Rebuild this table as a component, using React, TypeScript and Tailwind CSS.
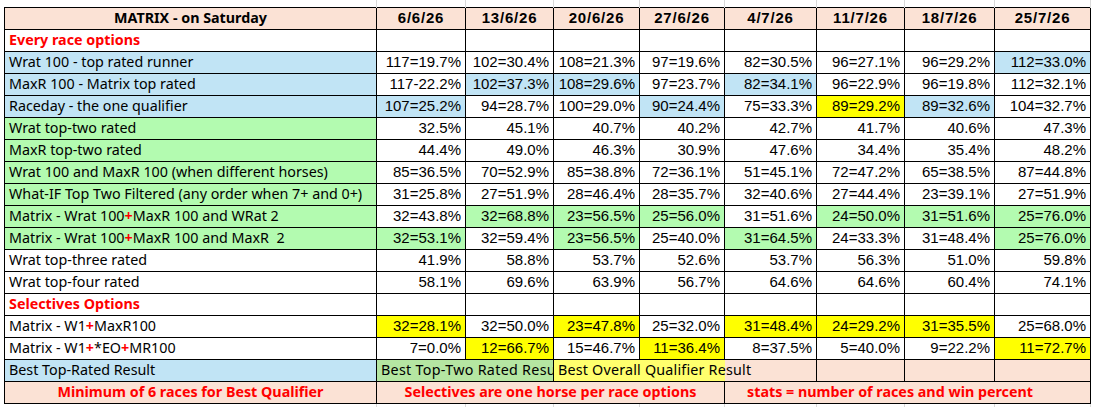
import React from "react";

type Cell = { v: string; bg?: string };
type Row = { label: React.ReactNode; labelBg: string; cells: Cell[] };

const BLUE = "bg-[#c1e4f5]";
const GREEN = "bg-[#b3fbb0]";
const YEL = "bg-[#ffff00]";
const PEACH = "bg-[#fbe2d5]";

const DATES = ["6/6/26", "13/6/26", "20/6/26", "27/6/26", "4/7/26", "11/7/26", "18/7/26", "25/7/26"];
const COLS = [89, 88, 86, 85, 92, 88, 90, 96];

const Plus = () => <span className="text-[#ff0000] font-bold">+</span>;

const c = (v: string, bg?: string): Cell => ({ v, bg });

const ROWS: Row[] = [
  {
    label: "Wrat 100 - top rated runner",
    labelBg: BLUE,
    cells: [c("117=19.7%"), c("102=30.4%"), c("108=21.3%"), c("97=19.6%"), c("82=30.5%"), c("96=27.1%"), c("96=29.2%"), c("112=33.0%", BLUE)],
  },
  {
    label: "MaxR 100 - Matrix top rated",
    labelBg: BLUE,
    cells: [c("117-22.2%"), c("102=37.3%", BLUE), c("108=29.6%", BLUE), c("97=23.7%"), c("82=34.1%", BLUE), c("96=22.9%"), c("96=19.8%"), c("112=32.1%")],
  },
  {
    label: "Raceday - the one qualifier",
    labelBg: BLUE,
    cells: [c("107=25.2%", BLUE), c("94=28.7%"), c("100=29.0%"), c("90=24.4%", BLUE), c("75=33.3%"), c("89=29.2%", YEL), c("89=32.6%", BLUE), c("104=32.7%")],
  },
  {
    label: "Wrat top-two rated",
    labelBg: GREEN,
    cells: ["32.5%", "45.1%", "40.7%", "40.2%", "42.7%", "41.7%", "40.6%", "47.3%"].map((v) => c(v)),
  },
  {
    label: "MaxR top-two rated",
    labelBg: GREEN,
    cells: ["44.4%", "49.0%", "46.3%", "30.9%", "47.6%", "34.4%", "35.4%", "48.2%"].map((v) => c(v)),
  },
  {
    label: "Wrat 100 and MaxR 100 (when different horses)",
    labelBg: GREEN,
    cells: ["85=36.5%", "70=52.9%", "85=38.8%", "72=36.1%", "51=45.1%", "72=47.2%", "65=38.5%", "87=44.8%"].map((v) => c(v)),
  },
  {
    label: "What-IF Top Two Filtered (any order when 7+ and 0+)",
    labelBg: GREEN,
    cells: ["31=25.8%", "27=51.9%", "28=46.4%", "28=35.7%", "32=40.6%", "27=44.4%", "23=39.1%", "27=51.9%"].map((v) => c(v)),
  },
  {
    label: (
      <>
        Matrix - Wrat 100<Plus />MaxR 100 and WRat 2
      </>
    ),
    labelBg: GREEN,
    cells: [c("32=43.8%"), c("32=68.8%", GREEN), c("23=56.5%", GREEN), c("25=56.0%", GREEN), c("31=51.6%"), c("24=50.0%", GREEN), c("31=51.6%", GREEN), c("25=76.0%", GREEN)],
  },
  {
    label: (
      <>
        Matrix - Wrat 100<Plus />MaxR 100 and MaxR&nbsp; 2
      </>
    ),
    labelBg: GREEN,
    cells: [c("32=53.1%", GREEN), c("32=59.4%"), c("23=56.5%", GREEN), c("25=40.0%"), c("31=64.5%", GREEN), c("24=33.3%"), c("31=48.4%"), c("25=76.0%", GREEN)],
  },
  {
    label: "Wrat top-three rated",
    labelBg: "bg-white",
    cells: ["41.9%", "58.8%", "53.7%", "52.6%", "53.7%", "56.3%", "51.0%", "59.8%"].map((v) => c(v)),
  },
  {
    label: "Wrat top-four rated",
    labelBg: "bg-white",
    cells: ["58.1%", "69.6%", "63.9%", "56.7%", "64.6%", "64.6%", "60.4%", "74.1%"].map((v) => c(v)),
  },
];

const SELECTIVE: Row[] = [
  {
    label: (
      <>
        Matrix - W1<Plus />MaxR100
      </>
    ),
    labelBg: "bg-white",
    cells: [c("32=28.1%", YEL), c("32=50.0%"), c("23=47.8%", YEL), c("25=32.0%"), c("31=48.4%", YEL), c("24=29.2%", YEL), c("31=35.5%", YEL), c("25=68.0%")],
  },
  {
    label: (
      <>
        Matrix - W1<Plus />*EO<Plus />MR100
      </>
    ),
    labelBg: "bg-white",
    cells: [c("7=0.0%"), c("12=66.7%", YEL), c("15=46.7%"), c("11=36.4%", YEL), c("8=37.5%"), c("5=40.0%"), c("9=22.2%"), c("11=72.7%", YEL)],
  },
];

// every sheet cell: black grid line, fixed 22px row
const td = "border border-black p-0 h-[22px] leading-[20px]";
const labelFont = "font-['Noto_Sans',sans-serif] text-[14.3px]";
const numFont = "font-['Liberation_Sans',Arial,sans-serif] text-[15px]";

const DataRow = ({ row }: { row: Row }) => (
  <tr>
    <td className={`${td} ${row.labelBg} ${labelFont} pl-[4px] whitespace-nowrap`}>{row.label}</td>
    {row.cells.map((cell, i) => (
      <td key={i} className={`${td} ${cell.bg ?? "bg-white"} ${numFont} text-right pr-[4px] whitespace-nowrap`}>
        {cell.v}
      </td>
    ))}
  </tr>
);

const EmptyRow = ({ label }: { label: string }) => (
  <tr>
    <td className={`${td} bg-white ${labelFont} font-bold text-[#ff0000] pl-[4px] whitespace-nowrap`}>{label}</td>
    {COLS.map((_, i) => (
      <td key={i} className={`${td} bg-white`} />
    ))}
  </tr>
);

// faint excel gridlines above/below the bordered block
const GridRow = ({ h }: { h: string }) => (
  <tr>
    <td className={`${h} p-0 leading-[0px] border-r border-r-[#d9d9d9]`} />
    {COLS.map((_, i) => (
      <td key={i} className={`${h} p-0 leading-[0px] border-r border-r-[#d9d9d9]`} />
    ))}
  </tr>
);

export default function App() {
  return (
    <div className="w-[1093px] h-[407px] bg-white overflow-hidden text-black">
      <table className="ml-[4px] table-fixed border-collapse w-[1087px]">
        <colgroup>
          <col className="w-[372px]" />
          {COLS.map((w, i) => (
            <col key={i} style={{ width: w }} />
          ))}
        </colgroup>
        <tbody>
          <GridRow h="h-[7px]" />
          <tr>
            <td className={`${td} ${PEACH} ${labelFont} font-bold text-center`}>MATRIX - on Saturday</td>
            {DATES.map((d) => (
              <td key={d} className={`${td} ${PEACH} ${numFont} font-bold text-center tracking-[0.8px]`}>
                {d}
              </td>
            ))}
          </tr>
          <EmptyRow label="Every race options" />
          {ROWS.map((r, i) => (
            <DataRow key={i} row={r} />
          ))}
          <EmptyRow label="Selectives Options" />
          {SELECTIVE.map((r, i) => (
            <DataRow key={i} row={r} />
          ))}
          <tr>
            <td className={`${td} ${BLUE} ${labelFont} pl-[4px] whitespace-nowrap`}>Best Top-Rated Result</td>
            <td colSpan={2} className={`${td} bg-[#b5e6a2] ${labelFont} tracking-[0.3px] pl-[4px] whitespace-nowrap overflow-hidden`}>
              Best Top-Two Rated Result
            </td>
            <td colSpan={2} className={`${td} border-r-0 bg-[#ffff6d] ${labelFont} tracking-[0.2px] pl-[4px] whitespace-nowrap`}>
              Best Overall Qualifier Result
            </td>
            <td className={`${td} border-l-0 ${PEACH}`} />
            <td className={`${td} ${PEACH}`} />
            <td className={`${td} ${PEACH}`} />
            <td className={`${td} ${PEACH}`} />
          </tr>
          <tr>
            <td className={`${td} ${PEACH} ${labelFont} font-bold text-[#ff0000] text-center whitespace-nowrap`}>
              Minimum of 6 races for Best Qualifier
            </td>
            <td colSpan={4} className={`${td} ${PEACH} ${labelFont} font-bold text-[#ff0000] text-center whitespace-nowrap`}>
              Selectives are one horse per race options
            </td>
            <td colSpan={4} className={`${td} ${PEACH} ${labelFont} font-bold text-[#ff0000] pl-[22px] whitespace-nowrap`}>
              stats = number of races and win percent
            </td>
          </tr>
          <GridRow h="h-[6px]" />
        </tbody>
      </table>
    </div>
  );
}
